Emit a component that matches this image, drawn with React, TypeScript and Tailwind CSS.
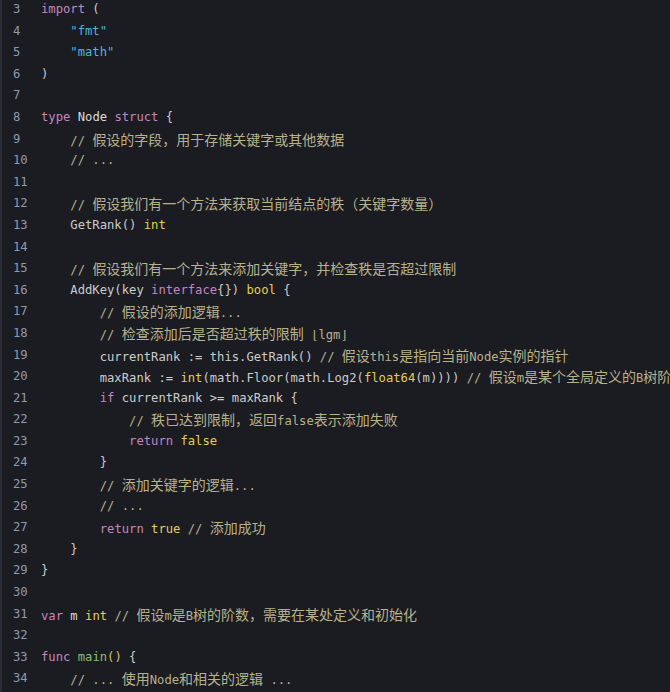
import React from "react";

type Tok = [string, string];

const K = "text-[#c586c0]"; // keyword
const S = "text-[#4fb6da]"; // string
const D = "text-[#cccccc]"; // default
const T = "text-[#e3cf52]"; // type / literal
const C = "text-[#b8b28c]"; // comment
const F = "text-[#86c06c]"; // function name
const W = "text-[#dcdcdc]"; // bright identifier
const Y = "text-[#d8c36a]"; // yellow paren

const lines: Tok[][] = [
  [["import", K], [" (", D]],
  [["    ", D], ['"fmt"', S]],
  [["    ", D], ['"math"', S]],
  [[")", D]],
  [],
  [["type", K], [" ", D], ["Node", W], [" ", D], ["struct", K], [" {", D]],
  [["    ", D], ["// 假设的字段，用于存储关键字或其他数据", C]],
  [["    ", D], ["// ...", C]],
  [],
  [["    ", D], ["// 假设我们有一个方法来获取当前结点的秩（关键字数量）", C]],
  [["    GetRank() ", D], ["int", T]],
  [],
  [["    ", D], ["// 假设我们有一个方法来添加关键字，并检查秩是否超过限制", C]],
  [["    AddKey(key ", D], ["interface", K], ["{}) ", D], ["bool", T], [" {", D]],
  [["        ", D], ["// 假设的添加逻辑...", C]],
  [["        ", D], ["// 检查添加后是否超过秩的限制 ⌊lgm⌋", C]],
  [["        currentRank := this.GetRank() ", D], ["// 假设this是指向当前Node实例的指针", C]],
  [["        maxRank := ", D], ["int", T], ["(math.Floor(math.Log2(", D], ["float64", T], ["(m)))) ", D], ["// 假设m是某个全局定义的B树阶数", C]],
  [["        ", D], ["if", K], [" currentRank >= maxRank {", D]],
  [["            ", D], ["// 秩已达到限制，返回false表示添加失败", C]],
  [["            ", D], ["return", K], [" ", D], ["false", T]],
  [["        }", D]],
  [["        ", D], ["// 添加关键字的逻辑...", C]],
  [["        ", D], ["// ...", C]],
  [["        ", D], ["return", K], [" ", D], ["true", T], [" ", D], ["// 添加成功", C]],
  [["    }", D]],
  [["}", D]],
  [],
  [["var", K], [" ", D], ["m", W], [" ", D], ["int", T], [" ", D], ["// 假设m是B树的阶数，需要在某处定义和初始化", C]],
  [],
  [["func", K], [" ", D], ["main", F], ["()", Y], [" {", D]],
  [["    ", D], ["// ... 使用Node和相关的逻辑 ...", C]],
];

const CJK = /([\u2000-\u206f\u3000-\u303f\u4e00-\u9fff\uff00-\uffef]+)/;

function renderText(text: string) {
  return text.split(CJK).map((part, i) =>
    i % 2 === 1 ? (
      <span key={i} className="text-[14px]" style={{ fontFamily: '"Noto Sans CJK SC", sans-serif' }}>
        {part}
      </span>
    ) : (
      <React.Fragment key={i}>{part}</React.Fragment>
    )
  );
}

export default function App() {
  return (
    <div className="w-[670px] h-[692px] overflow-hidden bg-[#1b1b22] border-l-2 border-[#2b2b33]">
      <div
        className="-mt-[1px] text-[12.2px] leading-[21.6px] whitespace-pre"
        style={{ fontFamily: '"DejaVu Sans Mono", "Noto Sans CJK SC", monospace' }}
      >
        {lines.map((toks, i) => (
          <div key={i} className="flex h-[21.6px]">
            <div className="w-[39px] shrink-0 pl-[11px] text-[#8e9aae]">{i + 3}</div>
            <div className="flex-1">
              {toks.map(([t, c], j) => (
                <span key={j} className={c}>
                  {renderText(t)}
                </span>
              ))}
            </div>
          </div>
        ))}
      </div>
    </div>
  );
}
